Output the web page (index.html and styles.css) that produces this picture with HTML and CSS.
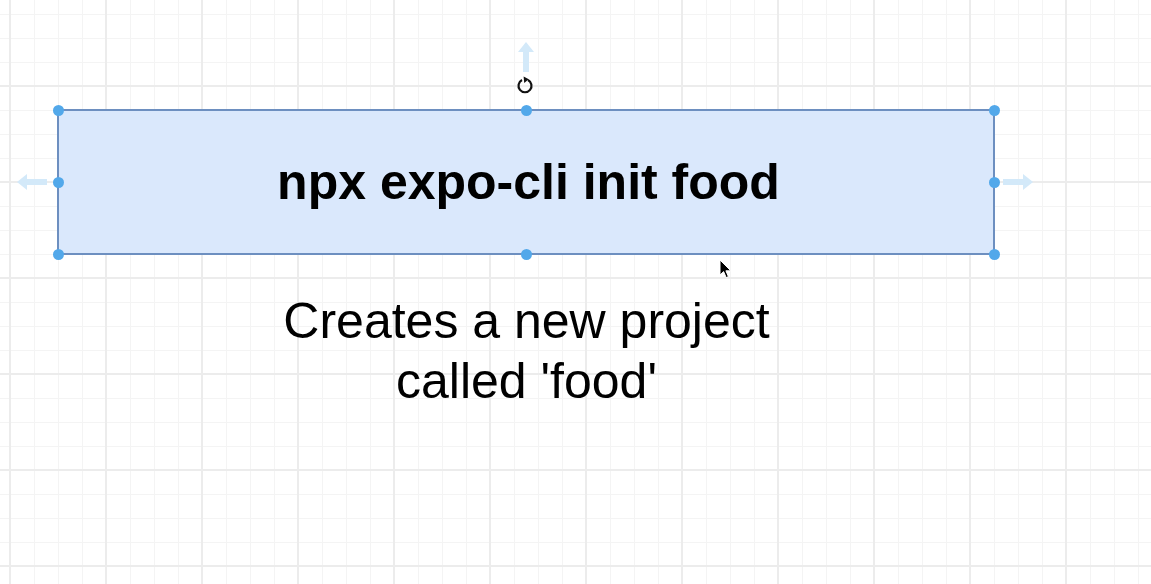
FILE: index.html
```html
<!DOCTYPE html>
<html>
<head>
<meta charset="utf-8">
<link rel="stylesheet" href="styles.css">
</head>
<body>
<div class="canvas">
  <div class="shape">
    <div class="shape-label">npx expo-cli init food</div>
  </div>

  <span class="handle h-tl"></span>
  <span class="handle h-tc"></span>
  <span class="handle h-tr"></span>
  <span class="handle h-ml"></span>
  <span class="handle h-mr"></span>
  <span class="handle h-bl"></span>
  <span class="handle h-bc"></span>
  <span class="handle h-br"></span>

  <svg class="arrow arrow-left" width="32" height="18" viewBox="0 0 32 18">
    <path d="M1 9 L11 1 L11 6 L31 6 L31 12 L11 12 L11 17 Z" fill="#d3e9f9"/>
  </svg>
  <svg class="arrow arrow-right" width="32" height="18" viewBox="0 0 32 18">
    <path d="M31 9 L21 1 L21 6 L1 6 L1 12 L21 12 L21 17 Z" fill="#d3e9f9"/>
  </svg>
  <svg class="arrow arrow-up" width="18" height="32" viewBox="0 0 18 32">
    <path d="M9 1 L17 11 L12 11 L12 31 L6 31 L6 11 L1 11 Z" fill="#d3e9f9"/>
  </svg>

  <svg class="rotate" width="20" height="20" viewBox="0 0 20 20">
    <path d="M13 5 A6.5 6.5 0 1 1 7 5" fill="none" stroke="#111" stroke-width="2.2"/>
    <path d="M8.6 1.6 L13.8 4.2 L9.2 8 Z" fill="#111"/>
  </svg>

  <div class="caption">Creates a new project<br>called 'food'</div>

  <svg class="cursor" width="14" height="20" viewBox="0 0 14 20">
    <path d="M1 1 L1 16 L4.6 12.6 L7.2 18.6 L9.4 17.6 L6.9 11.8 L11.8 11.8 Z" fill="#000" stroke="#fff" stroke-width="1"/>
  </svg>
</div>
</body>
</html>
```

FILE: styles.css
```css
html, body {
  margin: 0;
  padding: 0;
  background: #ffffff;
}

.canvas {
  position: relative;
  width: 1151px;
  height: 584px;
  overflow: hidden;
  font-family: "Liberation Sans", Arial, Helvetica, sans-serif;
  background-color: #ffffff;
  background-image:
    linear-gradient(to right, #ececec 0, #ececec 2px, transparent 2px),
    linear-gradient(to bottom, #ececec 0, #ececec 2px, transparent 2px),
    linear-gradient(to right, #f4f4f4 0, #f4f4f4 1px, transparent 1px),
    linear-gradient(to bottom, #f4f4f4 0, #f4f4f4 1px, transparent 1px);
  background-size: 96px 96px, 96px 96px, 24px 24px, 24px 24px;
  background-position: 9px 0, 0 85px, 10px 0, 0 14px;
}

.shape {
  position: absolute;
  left: 57px;
  top: 109px;
  width: 938px;
  height: 146px;
  box-sizing: border-box;
  border: 2px solid #6d8fc0;
  background: #dae8fc;
  display: flex;
  align-items: center;
  justify-content: center;
  padding-top: 2px;
  padding-left: 5px;
}

.shape-label {
  font-size: 50px;
  font-weight: bold;
  color: #000;
  line-height: 1.15;
  white-space: nowrap;
}

.handle {
  position: absolute;
  width: 11px;
  height: 11px;
  border-radius: 50%;
  background: #52a8ea;
  margin-left: -5.5px;
  margin-top: -5.5px;
}
.h-tl { left: 58px;  top: 110px; }
.h-tc { left: 526px; top: 110px; }
.h-tr { left: 994px; top: 110px; }
.h-ml { left: 58px;  top: 182px; }
.h-mr { left: 994px; top: 182px; }
.h-bl { left: 58px;  top: 254px; }
.h-bc { left: 526px; top: 254px; }
.h-br { left: 994px; top: 254px; }

.arrow { position: absolute; }
.arrow-left  { left: 16px;   top: 173px; }
.arrow-right { left: 1002px; top: 173px; }
.arrow-up    { left: 517px;  top: 41px; }

.rotate {
  position: absolute;
  left: 515px;
  top: 75px;
}

.caption {
  position: absolute;
  left: 0;
  top: 291px;
  width: 1053px;
  text-align: center;
  font-size: 50px;
  line-height: 60px;
  color: #000;
}

.cursor {
  position: absolute;
  left: 719px;
  top: 259px;
}
```
